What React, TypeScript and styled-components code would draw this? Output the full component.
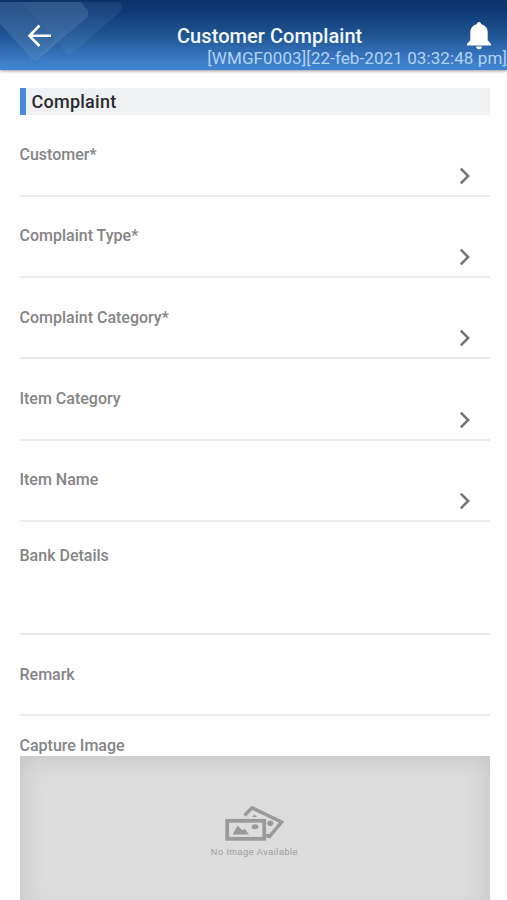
import React from "react";
import styled, { createGlobalStyle } from "styled-components";

const GlobalStyle = createGlobalStyle`
  * { box-sizing: border-box; }
  html, body { margin: 0; background: #fefefe; overflow: hidden; }
  body { font-family: Roboto, "Liberation Sans", sans-serif; }
`;

const Screen = styled.div`
  width: 507px;
  height: 900px;
  overflow: hidden;
  background: #fefefe;
`;

const Header = styled.header`
  position: relative;
  height: 70px;
  background: linear-gradient(#0b3267 0%, #0e3a74 16%, #205493 50%, #3470b8 76%, #4182cf 94%, #4182cf 100%);
  box-shadow: 0 1px 3px rgba(0, 0, 0, 0.42);
`;

const HeaderPattern = styled.svg`
  position: absolute;
  left: 0;
  top: 0;
`;

const TitleBar = styled.div`
  position: relative;
  height: 49px;
  display: grid;
  grid-template-columns: 177px 1fr 44px;
  align-items: start;
`;

const BackButton = styled.button`
  display: flex;
  margin: 24px 0 0 27px;
  width: 26px;
  padding: 0;
  border: 0;
  background: none;
`;

const Title = styled.h1`
  margin: 24px 0 0;
  font-size: 20px;
  line-height: 24px;
  font-weight: 500;
  letter-spacing: 0.06px;
  white-space: nowrap;
  color: #f3f8fe;
`;

const BellButton = styled(BackButton)`
  margin: 21px 0 0 3px;
`;

const Stamp = styled.div`
  position: relative;
  display: flex;
  justify-content: flex-end;
  height: 18px;
  font-size: 17px;
  line-height: 18px;
  letter-spacing: 0.09px;
  white-space: nowrap;
  color: #b3d3f5;
`;

const Form = styled.main`
  padding: 18px 17.5px 0 19.5px;
`;

const SectionTitle = styled.h2`
  margin: 0;
  height: 27px;
  padding-left: 6px;
  border-left: 6px solid #468bdb;
  background: #eff1f3;
  font-size: 18px;
  line-height: 27px;
  font-weight: 500;
  letter-spacing: 0.25px;
  color: #292b30;
`;

const Field = styled.div<{ $height: number; $top: number }>`
  display: flex;
  flex-direction: column;
  justify-content: space-between;
  height: ${(p) => p.$height}px;
  padding-top: ${(p) => p.$top}px;
  border-bottom: 2px solid #ebebeb;
`;

const Label = styled.label`
  font-size: 16px;
  line-height: 20px;
  font-weight: 500;
  color: #858585;
  white-space: nowrap;
`;

const Picker = styled.div`
  display: flex;
  justify-content: flex-end;
  padding: 0 18.5px 10px 0;
`;

const Capture = styled.section`
  display: flex;
  flex-direction: column;
  padding-top: 20px;
`;

const Preview = styled.div`
  display: flex;
  flex-direction: column;
  align-items: center;
  height: 160px;
  padding-top: 49px;
  background: #dddddd;
  box-shadow: inset 0 0 28px rgba(0, 0, 0, 0.13);
`;

const Caption = styled.span`
  margin-top: 4px;
  font-family: "Liberation Sans", Arial, sans-serif;
  font-size: 9px;
  line-height: 12px;
  letter-spacing: 0.55px;
  color: #999999;
`;

const pickers = [
  { name: "Customer*", height: 82, top: 30 },
  { name: "Complaint Type*", height: 81, top: 29 },
  { name: "Complaint Category*", height: 81, top: 30 },
  { name: "Item Category", height: 82, top: 30 },
  { name: "Item Name", height: 81, top: 29 },
];

const Chevron = () => (
  <svg width="12" height="18" viewBox="0 0 12 18" fill="none">
    <path d="M1.8 1.6L9.2 9L1.8 16.4" stroke="#747474" strokeWidth="2.5" />
  </svg>
);

const BackArrow = () => (
  <svg width="26" height="24" viewBox="0 0 26 24" fill="none">
    <path d="M12.5 1.5L2.5 11.8L12.5 22M2.5 11.8H24" stroke="#fff" strokeWidth="2.6" />
  </svg>
);

const Bell = () => (
  <svg width="26" height="29" viewBox="0 0 26 29" fill="#fff">
    <path d="M13 1C11.6 1 10.8 2 10.8 3.3C6.7 4.2 4.3 7.3 4.3 11.7V19.2L1 22.9V24.4H25V22.9L21.7 19.2V11.7C21.7 7.3 19.3 4.2 15.2 3.3C15.2 2 14.4 1 13 1Z" />
    <path d="M10.1 25.4H15.9C15.9 27.2 14.6 28.3 13 28.3S10.1 27.2 10.1 25.4Z" />
  </svg>
);

const PhotosIcon = () => (
  <svg width="60" height="37" viewBox="0 0 60 37" fill="none">
    <path d="M19.5 10.5L27 2.8L56.5 17L44.5 31.5L41.5 30" stroke="#9a9a9a" strokeWidth="3.5" />
    <path d="M27 12L29.5 9.5L32 12Z" fill="#9a9a9a" />
    <ellipse cx="45.3" cy="18.3" rx="3" ry="2.8" fill="#9a9a9a" />
    <path d="M40 29L45 30L43 33L40 32Z" fill="#9a9a9a" />
    <rect x="2.2" y="15.8" width="37" height="18" fill="#dddddd" stroke="#9a9a9a" strokeWidth="3.8" />
    <path d="M7.5 29.5L12.7 20.5L17 25L20 24L24 29.5Z" fill="#9a9a9a" />
    <ellipse cx="30" cy="21.8" rx="3.4" ry="2.5" fill="#9a9a9a" />
  </svg>
);

export default function App() {
  return (
    <Screen>
      <GlobalStyle />
      <Header>
        <HeaderPattern width="140" height="70" viewBox="0 0 140 70">
          <defs>
            <linearGradient id="facet" x1="0" y1="0" x2="0" y2="1">
              <stop offset="0" stopColor="#9cc2e5" stopOpacity=".25" />
              <stop offset="1" stopColor="#9cc2e5" stopOpacity=".19" />
            </linearGradient>
          </defs>
          <path d="M0 2H81L88 11V17L38 59Q35 62 32 58L0 24Z" fill="url(#facet)" />
          <path d="M0 2H22L55 40L36 60L0 24Z" fill="#063878" opacity=".1" />
          <path d="M81 2H120Q123 6 120 12L73 53Q68 57 64 51L58 43L88 17V11Z" fill="#7facd9" opacity=".12" />
        </HeaderPattern>
        <TitleBar>
          <BackButton aria-label="Back"><BackArrow /></BackButton>
          <Title>Customer Complaint</Title>
          <BellButton aria-label="Notifications"><Bell /></BellButton>
        </TitleBar>
        <Stamp>[WMGF0003][22-feb-2021 03:32:48 pm]</Stamp>
      </Header>
      <Form>
        <SectionTitle>Complaint</SectionTitle>
        {pickers.map(({ name, height, top }) => (
          <Field key={name} $height={height} $top={top}>
            <Label>{name}</Label>
            <Picker><Chevron /></Picker>
          </Field>
        ))}
        <Field $height={113} $top={24}><Label>Bank Details</Label></Field>
        <Field $height={81} $top={30}><Label>Remark</Label></Field>
        <Capture>
          <Label>Capture Image</Label>
          <Preview>
            <PhotosIcon />
            <Caption>No Image Available</Caption>
          </Preview>
        </Capture>
      </Form>
    </Screen>
  );
}
